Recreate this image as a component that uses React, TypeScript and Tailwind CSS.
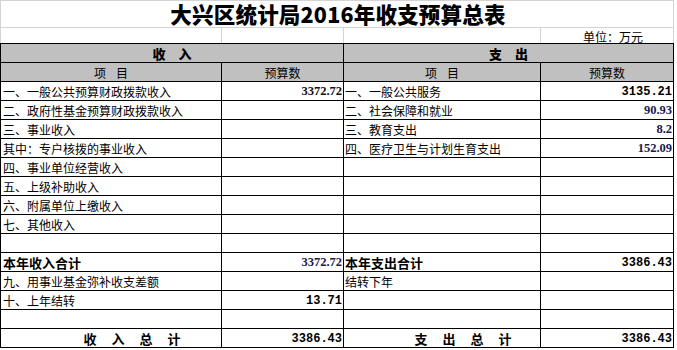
type NumStyle = "serif" | "navy" | "mono";

type Cell = {
  label?: string;
  bold?: boolean;
  total?: string[];
  value?: string;
  style?: NumStyle;
};

const rows: [Cell, Cell][] = [
  [
    { label: "一、一般公共预算财政拨款收入", value: "3372.72", style: "serif" },
    { label: "一、一般公共服务", value: "3135.21", style: "mono" },
  ],
  [
    { label: "二、政府性基金预算财政拨款收入" },
    { label: "二、社会保障和就业", value: "90.93", style: "navy" },
  ],
  [
    { label: "三、事业收入" },
    { label: "三、教育支出", value: "8.2", style: "navy" },
  ],
  [
    { label: "其中：专户核拨的事业收入" },
    { label: "四、医疗卫生与计划生育支出", value: "152.09", style: "navy" },
  ],
  [{ label: "四、事业单位经营收入" }, {}],
  [{ label: "五、上级补助收入" }, {}],
  [{ label: "六、附属单位上缴收入" }, {}],
  [{ label: "七、其他收入" }, {}],
  [{}, {}],
  [
    { label: "本年收入合计", bold: true, value: "3372.72", style: "navy" },
    { label: "本年支出合计", bold: true, value: "3386.43", style: "mono" },
  ],
  [{ label: "九、用事业基金弥补收支差额" }, { label: "结转下年" }],
  [{ label: "十、上年结转", value: "13.71", style: "mono" }, {}],
  [{}, {}],
  [
    { total: ["收", "入", "总", "计"], value: "3386.43", style: "mono" },
    { total: ["支", "出", "总", "计"], value: "3386.43", style: "mono" },
  ],
];

const numClass: Record<NumStyle, string> = {
  serif: "font-['Liberation_Serif',serif] font-bold text-[12.5px] text-[#111118]",
  navy: "font-['Liberation_Serif',serif] font-bold text-[12.5px] text-[#1a1a4c]",
  mono: "font-['Liberation_Mono',monospace] font-bold text-[12px] text-black",
};

function LabelCell({ cell, pad }: { cell: Cell; pad: string }) {
  if (cell.total) {
    return (
      <div className="flex h-[19px] items-center justify-center gap-[15px] border-r border-b border-black pt-[1px] pl-[42px] text-[13px] font-bold">
        {cell.total.map((ch, i) => (
          <span key={i}>{ch}</span>
        ))}
      </div>
    );
  }
  return (
    <div
      className={`flex h-[19px] items-center overflow-hidden whitespace-nowrap border-r border-b border-black pt-[1px] ${pad} ${
        cell.bold ? "text-[13px] font-bold" : "text-[12px]"
      }`}
    >
      {cell.label}
    </div>
  );
}

function ValueCell({ cell }: { cell: Cell }) {
  return (
    <div className="flex h-[19px] items-center justify-end border-r border-b border-black pt-[1px] pr-[1px]">
      {cell.value && cell.style && (
        <span className={numClass[cell.style]}>{cell.value}</span>
      )}
    </div>
  );
}

export default function App() {
  return (
    <div className="h-[350px] w-[677px] bg-white font-['Noto_Sans_CJK_SC',sans-serif] text-black leading-none">
      {/* Title */}
      <div className="flex h-[28px] w-[674px] items-center justify-center border-x border-y border-[#d4d4d4] pl-[2px]">
        <h1 className="whitespace-nowrap text-[21.5px] leading-[24px] font-black tracking-[0.2px]">
          大兴区统计局2016年收支预算总表
        </h1>
      </div>

      {/* Unit row */}
      <div className="grid h-[15px] w-[674px] grid-cols-[221px_122px_197px_133px] border-l border-[#d4d4d4]">
        <div className="border-r border-[#d4d4d4]" />
        <div className="border-r border-[#d4d4d4]" />
        <div className="border-r border-[#d4d4d4]" />
        <div className="flex items-end justify-end border-r border-[#d4d4d4] pr-[30px] text-[12px]">
          单位：万元
        </div>
      </div>

      {/* Table */}
      <div className="grid w-[674px] grid-cols-[221px_122px_197px_133px] border-l border-t border-black">
        <div className="col-span-2 flex h-[19px] items-center justify-center gap-[13px] border-r border-b border-black bg-[#c0c0c0] pt-[1px] text-[13px] font-black">
          <span>收</span>
          <span>入</span>
        </div>
        <div className="col-span-2 flex h-[19px] items-center justify-center gap-[13px] border-r border-b border-black bg-[#c0c0c0] pt-[1px] text-[13px] font-black">
          <span>支</span>
          <span>出</span>
        </div>

        <div className="flex h-[19px] items-center justify-center gap-[10px] border-r border-b border-black bg-[#c0c0c0] pt-[1px] text-[12px]">
          <span>项</span>
          <span>目</span>
        </div>
        <div className="flex h-[19px] items-center justify-center border-r border-b border-black bg-[#c0c0c0] pt-[1px] text-[12px]">
          预算数
        </div>
        <div className="flex h-[19px] items-center justify-center gap-[10px] border-r border-b border-black bg-[#c0c0c0] pt-[1px] text-[12px]">
          <span>项</span>
          <span>目</span>
        </div>
        <div className="flex h-[19px] items-center justify-center border-r border-b border-black bg-[#c0c0c0] pt-[1px] text-[12px]">
          预算数
        </div>

        {rows.map(([left, right], i) => (
          <div key={i} className="contents">
            <LabelCell cell={left} pad="pl-[2px]" />
            <ValueCell cell={left} />
            <LabelCell cell={right} pad="pl-[1px]" />
            <ValueCell cell={right} />
          </div>
        ))}
      </div>
    </div>
  );
}
